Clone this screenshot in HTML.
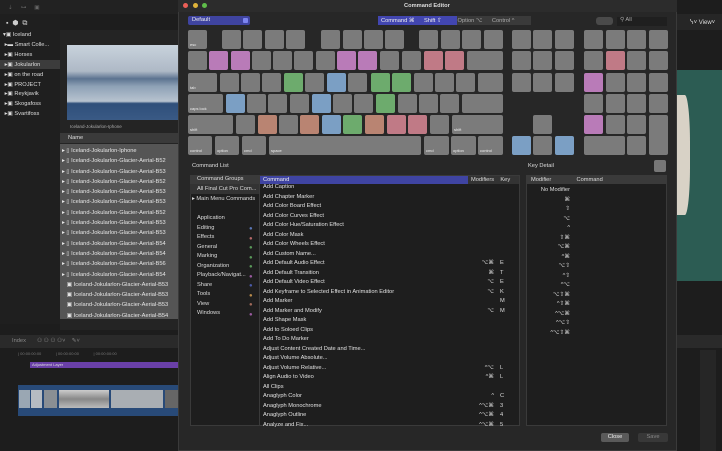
<!DOCTYPE html>
<html><head><meta charset="utf-8"><style>
*{margin:0;padding:0;box-sizing:border-box}
body{width:722px;height:451px;background:#1d1d1d;overflow:hidden;position:relative;font-family:"Liberation Sans","DejaVu Sans",sans-serif;color:#ddd;font-size:5.7px}
.a{position:absolute;white-space:nowrap}
.k{position:absolute;background:#7b7b7b;border-radius:2px;width:19px;height:19px}
.p{background:#b97bb8}.g{background:#6dab6d}.b{background:#7b9fc4}.s{background:#b98472}.r{background:#c07a86}
.kt{position:absolute;left:2px;bottom:2px;font-size:4px;color:#eee}
</style></head><body>
<!-- left app -->
<div class="a" style="left:0;top:0;width:178px;height:14px;background:#222"></div>
<div class="a" style="left:8px;top:5px;color:#666">⇣ &nbsp;&nbsp;&nbsp; ⊶ &nbsp;&nbsp;&nbsp; ▣</div>
<div class="a" style="left:0;top:14px;width:60px;height:310px;background:#1f1f1f"></div>
<div class="a" style="left:6px;top:19px;color:#ccc;font-size:7px">▪ &nbsp;⬢ &nbsp;⧉</div>
<div class="a" style="left:0;top:60px;width:60px;height:9px;background:#3c3c3c"></div>
<div class="a" style="left:3px;top:31px;line-height:9.9px;color:#ddd">▾▣ Iceland<br>&nbsp;▸▬ Smart Colle...<br>&nbsp;▸▣ Horses<br>&nbsp;▸▣ Jokularlon<br>&nbsp;▸▣ on the road<br>&nbsp;▸▣ PROJECT<br>&nbsp;▸▣ Reykjavik<br>&nbsp;▸▣ Skogafoss<br>&nbsp;▸▣ Svartifoss</div>
<div class="a" style="left:60px;top:30px;width:118px;height:300px;background:#242424"></div>
<div class="a" style="left:67px;top:45px;width:111px;height:75px;background:linear-gradient(#c8d2dc 0%,#aeb9c6 35%,#5c7390 45%,#8ea1b6 55%,#b7c3cf 75%,#2f4f7a 78%,#3a5a85 100%)"></div>
<div class="a" style="left:70px;top:124px;color:#aaa;font-size:4.5px">Iceland-Jokularlon-Iphone</div>
<div class="a" style="left:60px;top:133px;width:118px;height:10px;background:#3a3a3a"></div>
<div class="a" style="left:68px;top:135px;color:#ddd">Name</div>
<div class="a" style="left:60px;top:144px;width:118px;height:175px;background:#555"></div>
<div class="a" style="left:62px;top:146px;line-height:10.3px;color:#e6e6e6">▸ ▯ Iceland-Jokularlon-Iphone<br>▸ ▯ Iceland-Jokularlon-Glacier-Aerial-B52<br>▸ ▯ Iceland-Jokularlon-Glacier-Aerial-B53<br>▸ ▯ Iceland-Jokularlon-Glacier-Aerial-B52<br>▸ ▯ Iceland-Jokularlon-Glacier-Aerial-B53<br>▸ ▯ Iceland-Jokularlon-Glacier-Aerial-B53<br>▸ ▯ Iceland-Jokularlon-Glacier-Aerial-B52<br>▸ ▯ Iceland-Jokularlon-Glacier-Aerial-B53<br>▸ ▯ Iceland-Jokularlon-Glacier-Aerial-B53<br>▸ ▯ Iceland-Jokularlon-Glacier-Aerial-B54<br>▸ ▯ Iceland-Jokularlon-Glacier-Aerial-B54<br>▸ ▯ Iceland-Jokularlon-Glacier-Aerial-B56<br>▸ ▯ Iceland-Jokularlon-Glacier-Aerial-B54<br>&nbsp;&nbsp; ▣ Iceland-Jokularlon-Glacier-Aerial-B53<br>&nbsp;&nbsp; ▣ Iceland-Jokularlon-Glacier-Aerial-B53<br>&nbsp;&nbsp; ▣ Iceland-Jokularlon-Glacier-Aerial-B53<br>&nbsp;&nbsp; ▣ Iceland-Jokularlon-Glacier-Aerial-B54</div>
<div class="a" style="left:0;top:335px;width:178px;height:13px;background:#2a2a2a"></div>
<div class="a" style="left:12px;top:338px;color:#888">Index &nbsp;&nbsp;&nbsp;&nbsp;&nbsp; ⚇ ⚇ ⚇ ⚇˅ &nbsp;&nbsp; ✎˅</div>
<div class="a" style="left:18px;top:351px;color:#777;font-size:4px">| 00:00:00:00 &nbsp;&nbsp;&nbsp;&nbsp;&nbsp;&nbsp;&nbsp;&nbsp;&nbsp;&nbsp;&nbsp; | 00:00:00:00 &nbsp;&nbsp;&nbsp;&nbsp;&nbsp;&nbsp;&nbsp;&nbsp;&nbsp;&nbsp;&nbsp; | 00:00:00:00</div>
<div class="a" style="left:30px;top:362px;width:148px;height:6px;background:#6a40a8;color:#ddd;font-size:4px;padding-left:2px;line-height:6px">Adjustment Layer</div>
<div class="a" style="left:18px;top:385px;width:160px;height:31px;background:#284a78"></div>
<div class="a" style="left:19px;top:390px;width:11px;height:18px;background:#9aa7b3"></div>
<div class="a" style="left:31px;top:390px;width:11px;height:18px;background:#b7bcc2"></div>
<div class="a" style="left:44px;top:390px;width:13px;height:18px;background:#8a8f94"></div>
<div class="a" style="left:59px;top:390px;width:50px;height:18px;background:linear-gradient(#ccc,#888 50%,#bbb)"></div>
<div class="a" style="left:111px;top:390px;width:52px;height:18px;background:#a9aeb3"></div>
<div class="a" style="left:165px;top:390px;width:13px;height:18px;background:#666"></div>
<!-- right app -->
<div class="a" style="left:677px;top:14px;width:45px;height:16px;background:#262626"></div>
<div class="a" style="left:690px;top:19px;color:#ddd;font-size:6px">ᓭ˅ View˅</div>
<div class="a" style="left:677px;top:70px;width:45px;height:211px;background:#2c5c53"></div>
<div class="a" style="left:677px;top:95px;width:13px;height:120px;background:#d8d2c6;border-radius:0 40% 40% 0"></div>
<div class="a" style="left:677px;top:335px;width:45px;height:13px;background:#2a2a2a"></div>
<div class="a" style="left:700px;top:350px;width:16px;height:101px;background:#262626"></div>
<!-- dialog -->
<div class="a" style="left:178px;top:0;width:499px;height:451px;background:#272727;border:1px solid #3a3a3a"></div>
<div class="a" style="left:178px;top:0;width:499px;height:12px;background:#2c2c2c"></div>
<div class="a" style="left:183px;top:3px;width:5px;height:5px;border-radius:50%;background:#ec5f57"></div>
<div class="a" style="left:193px;top:3px;width:5px;height:5px;border-radius:50%;background:#e0b43a"></div>
<div class="a" style="left:202px;top:3px;width:5px;height:5px;border-radius:50%;background:#5fbd4a"></div>
<div class="a" style="left:404px;top:3px;color:#ddd;font-weight:bold">Command Editor</div>
<div class="a" style="left:188px;top:16px;width:62px;height:9px;background:#3f44a0;border-radius:2px;padding-left:4px;line-height:9px;color:#eee">Default</div>
<div class="a" style="left:243px;top:18px;width:5px;height:5px;background:#7d85f0;border-radius:1px"></div>
<div class="a" style="left:378px;top:16px;width:79px;height:9px;background:#4246b0"></div>
<div class="a" style="left:457px;top:16px;width:74px;height:9px;background:#3a3a3a"></div>
<div class="a" style="left:381px;top:18px;color:#eee">Command ⌘ &nbsp;&nbsp;&nbsp;&nbsp; Shift ⇧ &nbsp;&nbsp;&nbsp;&nbsp;&nbsp;&nbsp;&nbsp;&nbsp; <span style="color:#aaa">Option ⌥ &nbsp;&nbsp;&nbsp;&nbsp; Control ^</span></div>
<div class="a" style="left:596px;top:17px;width:17px;height:8px;background:#4a4a4a;border-radius:3px"></div>
<div class="a" style="left:617px;top:17px;width:50px;height:9px;background:#1f1f1f"></div>
<div class="a" style="left:620px;top:17px;color:#aaa">⚲ All</div>

<!-- keyboard -->
<div class="k" style="left:188px;top:30px"><span class="kt">esc</span></div>
<div class="k" style="left:222px;top:30px"></div><div class="k" style="left:243px;top:30px"></div><div class="k" style="left:265px;top:30px"></div><div class="k" style="left:286px;top:30px"></div>
<div class="k" style="left:321px;top:30px"></div><div class="k" style="left:343px;top:30px"></div><div class="k" style="left:364px;top:30px"></div><div class="k" style="left:385px;top:30px"></div>
<div class="k" style="left:419px;top:30px"></div><div class="k" style="left:441px;top:30px"></div><div class="k" style="left:462px;top:30px"></div><div class="k" style="left:484px;top:30px"></div>
<!-- row2 -->
<div class="k" style="left:188px;top:51px"></div><div class="k p" style="left:209px;top:51px"></div><div class="k p" style="left:231px;top:51px"></div><div class="k" style="left:252px;top:51px"></div><div class="k" style="left:273px;top:51px"></div><div class="k" style="left:294px;top:51px"></div><div class="k" style="left:316px;top:51px"></div><div class="k p" style="left:337px;top:51px"></div><div class="k p" style="left:358px;top:51px"></div><div class="k" style="left:380px;top:51px"></div><div class="k" style="left:402px;top:51px"></div><div class="k r" style="left:424px;top:51px"></div><div class="k r" style="left:445px;top:51px"></div><div class="k" style="left:467px;top:51px;width:36px"></div>
<!-- row3 -->
<div class="k" style="left:188px;top:73px;width:29px"><span class="kt">tab</span></div><div class="k" style="left:220px;top:73px"></div><div class="k" style="left:241px;top:73px"></div><div class="k" style="left:262px;top:73px"></div><div class="k g" style="left:284px;top:73px"></div><div class="k" style="left:305px;top:73px"></div><div class="k b" style="left:327px;top:73px"></div><div class="k" style="left:348px;top:73px"></div><div class="k g" style="left:371px;top:73px"></div><div class="k g" style="left:392px;top:73px"></div><div class="k" style="left:414px;top:73px"></div><div class="k" style="left:435px;top:73px"></div><div class="k" style="left:456px;top:73px"></div><div class="k" style="left:478px;top:73px;width:25px"></div>
<!-- row4 -->
<div class="k" style="left:188px;top:94px;width:35px"><span class="kt">caps lock</span></div><div class="k b" style="left:226px;top:94px"></div><div class="k" style="left:247px;top:94px"></div><div class="k" style="left:268px;top:94px"></div><div class="k" style="left:290px;top:94px"></div><div class="k b" style="left:312px;top:94px"></div><div class="k" style="left:333px;top:94px"></div><div class="k" style="left:354px;top:94px"></div><div class="k g" style="left:376px;top:94px"></div><div class="k" style="left:398px;top:94px"></div><div class="k" style="left:419px;top:94px"></div><div class="k" style="left:440px;top:94px"></div><div class="k" style="left:462px;top:94px;width:41px"></div>
<!-- row5 -->
<div class="k" style="left:188px;top:115px;width:45px"><span class="kt">shift</span></div><div class="k" style="left:236px;top:115px"></div><div class="k s" style="left:258px;top:115px"></div><div class="k" style="left:279px;top:115px"></div><div class="k s" style="left:300px;top:115px"></div><div class="k b" style="left:322px;top:115px"></div><div class="k g" style="left:343px;top:115px"></div><div class="k s" style="left:365px;top:115px"></div><div class="k r" style="left:387px;top:115px"></div><div class="k r" style="left:408px;top:115px"></div><div class="k" style="left:430px;top:115px"></div><div class="k" style="left:452px;top:115px;width:51px"><span class="kt">shift</span></div>
<!-- row6 -->
<div class="k" style="left:188px;top:136px;width:24px"><span class="kt">control</span></div><div class="k" style="left:215px;top:136px;width:24px"><span class="kt">option</span></div><div class="k" style="left:242px;top:136px;width:24px"><span class="kt">cmd</span></div><div class="k" style="left:269px;top:136px;width:152px"><span class="kt">space</span></div><div class="k" style="left:424px;top:136px;width:25px"><span class="kt">cmd</span></div><div class="k" style="left:451px;top:136px;width:25px"><span class="kt">option</span></div><div class="k" style="left:478px;top:136px;width:25px"><span class="kt">control</span></div>
<!-- middle -->
<div class="k" style="left:512px;top:30px"></div><div class="k" style="left:533px;top:30px"></div><div class="k" style="left:555px;top:30px"></div>
<div class="k" style="left:512px;top:51px"></div><div class="k" style="left:533px;top:51px"></div><div class="k" style="left:555px;top:51px"></div>
<div class="k" style="left:512px;top:73px"></div><div class="k" style="left:533px;top:73px"></div><div class="k" style="left:555px;top:73px"></div>
<div class="k" style="left:533px;top:115px"></div>
<div class="k b" style="left:512px;top:136px"></div><div class="k" style="left:533px;top:136px"></div><div class="k b" style="left:555px;top:136px"></div>
<!-- numpad -->
<div class="k" style="left:584px;top:30px"></div><div class="k" style="left:606px;top:30px"></div><div class="k" style="left:627px;top:30px"></div><div class="k" style="left:649px;top:30px"></div>
<div class="k" style="left:584px;top:51px"></div><div class="k r" style="left:606px;top:51px"></div><div class="k" style="left:627px;top:51px"></div><div class="k" style="left:649px;top:51px"></div>
<div class="k p" style="left:584px;top:73px"></div><div class="k" style="left:606px;top:73px"></div><div class="k" style="left:627px;top:73px"></div><div class="k" style="left:649px;top:73px"></div>
<div class="k" style="left:584px;top:94px"></div><div class="k" style="left:606px;top:94px"></div><div class="k" style="left:627px;top:94px"></div><div class="k" style="left:649px;top:94px"></div>
<div class="k p" style="left:584px;top:115px"></div><div class="k" style="left:606px;top:115px"></div><div class="k" style="left:627px;top:115px"></div><div class="k" style="left:649px;top:115px;height:40px"></div>
<div class="k" style="left:584px;top:136px;width:41px"></div><div class="k" style="left:627px;top:136px"></div>

<div class="a" style="left:192px;top:163px;color:#ddd">Command List</div>
<div class="a" style="left:528px;top:163px;color:#ddd">Key Detail</div>
<div class="a" style="left:654px;top:160px;width:12px;height:12px;background:#777;border-radius:2px"></div>

<!-- command list -->
<div class="a" style="left:190px;top:175px;width:330px;height:251px;background:#1e1e1e;border:1px solid #3a3a3a"></div>
<div class="a" style="left:190px;top:175px;width:69px;height:9px;background:#3a3a3a;color:#ddd;padding-left:7px;line-height:9px">Command Groups</div>
<div class="a" style="left:190px;top:184px;width:69px;height:10px;background:#333;color:#ddd;padding-left:7px;line-height:10px">All Final Cut Pro Com...</div>
<div class="a" style="left:259px;top:175px;width:1px;height:251px;background:#3a3a3a"></div>
<div class="a" style="left:260px;top:176px;width:208px;height:8px;background:#3f44a2;color:#eee;padding-left:3px;line-height:8px">Command</div>
<div class="a" style="left:468px;top:176px;width:51px;height:8px;background:#333;color:#ddd;line-height:8px;padding-left:3px">Modifiers &nbsp;&nbsp; Key</div>
<div class="a" style="left:192px;top:196px;color:#ddd">▸ Main Menu Commands</div>
<div class="a" style="left:197px;top:214px;line-height:9.5px;color:#ddd">Application<br>Editing<br>Effects<br>General<br>Marking<br>Organization<br>Playback/Navigat...<br>Share<br>Tools<br>View<br>Windows</div>
<div class="a" style="left:249px;top:225px;line-height:9.5px;font-size:6px"><span style="color:#5b78b8">●</span><br><span style="color:#b86a6a">●</span><br><span style="color:#5a9a5a">●</span><br><span style="color:#5a9a5a">●</span><br><span style="color:#5a9a5a">●</span><br><span style="color:#9a5aa0">●</span><br><span style="color:#4a5aa8">●</span><br><span style="color:#b88a4a">●</span><br><span style="color:#a06a5a">●</span><br><span style="color:#9a5aa0">●</span></div>
<div class="a" style="left:263px;top:183px;line-height:9.5px;color:#e0e0e0">Add Caption<br>Add Chapter Marker<br>Add Color Board Effect<br>Add Color Curves Effect<br>Add Color Hue/Saturation Effect<br>Add Color Mask<br>Add Color Wheels Effect<br>Add Custom Name...<br>Add Default Audio Effect<br>Add Default Transition<br>Add Default Video Effect<br>Add Keyframe to Selected Effect in Animation Editor<br>Add Marker<br>Add Marker and Modify<br>Add Shape Mask<br>Add to Soloed Clips<br>Add To Do Marker<br>Adjust Content Created Date and Time...<br>Adjust Volume Absolute...<br>Adjust Volume Relative...<br>Align Audio to Video<br>All Clips<br>Anaglyph Color<br>Anaglyph Monochrome<br>Anaglyph Outline<br>Analyze and Fix...</div>
<div class="a" style="left:470px;top:259px;width:24px;text-align:right;line-height:9.5px;color:#ddd">⌥⌘<br>⌘<br>⌥<br>⌥<br><br>⌥<br><br><br><br><br><br>^⌥<br>^⌘<br><br>^<br>^⌥⌘<br>^⌥⌘<br>^⌥⌘</div>
<div class="a" style="left:500px;top:259px;line-height:9.5px;color:#ddd">E<br>T<br>E<br>K<br>M<br>M<br><br><br><br><br><br>L<br>L<br><br>C<br>3<br>4<br>5</div>
<!-- key detail -->
<div class="a" style="left:526px;top:175px;width:141px;height:251px;background:#1e1e1e;border:1px solid #3a3a3a"></div>
<div class="a" style="left:527px;top:176px;width:139px;height:8px;background:#3a3a3a;color:#ddd;line-height:8px;padding-left:4px">Modifier &nbsp;&nbsp;&nbsp;&nbsp;&nbsp;&nbsp;&nbsp;&nbsp;&nbsp;&nbsp;&nbsp;&nbsp;&nbsp;&nbsp; Command</div>
<div class="a" style="left:530px;top:186px;width:40px;text-align:right;line-height:9.5px;color:#ddd">No Modifier<br>⌘<br>⇧<br>⌥<br>^<br>⇧⌘<br>⌥⌘<br>^⌘<br>⌥⇧<br>^⇧<br>^⌥<br>⌥⇧⌘<br>^⇧⌘<br>^⌥⌘<br>^⌥⇧<br>^⌥⇧⌘</div>
<div class="a" style="left:601px;top:433px;width:28px;height:9px;background:#5a5a5a;border-radius:2px;color:#eee;text-align:center;line-height:9px">Close</div>
<div class="a" style="left:638px;top:433px;width:30px;height:9px;background:#383838;border-radius:2px;color:#888;text-align:center;line-height:9px">Save</div>
</body></html>
